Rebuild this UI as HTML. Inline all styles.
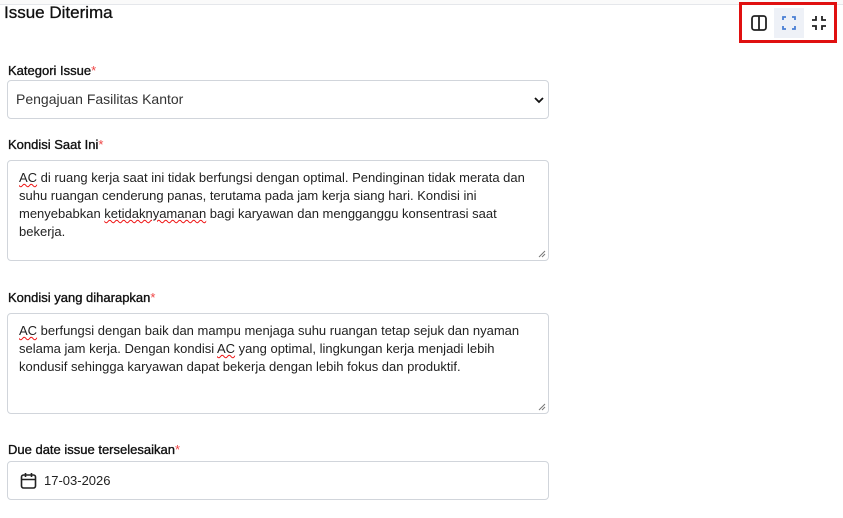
<!DOCTYPE html>
<html><head><style>
body{margin:0;width:843px;height:518px;background:#fff;font-family:"Liberation Sans",sans-serif;color:#1f2937;position:relative;overflow:hidden}
.topline{position:absolute;left:0;right:0;top:0;height:4px;border-bottom:1px solid #e5e7eb;background:#fafafa}
h1{position:absolute;left:4px;top:3px;margin:0;font-size:17px;font-weight:normal;color:#111;-webkit-text-stroke:0.3px #111}
.lbl{position:absolute;left:8px;font-size:13px;color:#111;-webkit-text-stroke:0.35px #111}
.lbl span{color:#ef4444;-webkit-text-stroke:0}
.box{position:absolute;left:7px;width:542px;border:1px solid #d1d5db;border-radius:4px;background:#fff;box-sizing:border-box}
.ta{font-size:13px;line-height:18px;color:#222;padding:8px 11px}
.u{text-decoration:underline wavy #e11;text-decoration-thickness:1px}
.tools{position:absolute;left:739px;top:2px;width:98px;height:41px;border:3px solid #e01010;box-sizing:border-box}
.btn{position:absolute;top:3px;width:30px;height:30px}
.grip{position:absolute;right:2px;bottom:2px}
</style></head><body>
<div class="topline"></div>
<h1>Issue Diterima</h1>
<div class="tools">
 <div class="btn" style="left:2px"><svg width="30" height="30"><rect x="8" y="8" width="14" height="14" rx="2.5" fill="none" stroke="#222" stroke-width="1.8"/><line x1="15" y1="8" x2="15" y2="22" stroke="#222" stroke-width="1.8"/></svg></div>
 <div class="btn" style="left:32px;background:#eef1f7"><svg width="30" height="30" fill="none" stroke="#4a7fd4" stroke-width="1.8"><path d="M9 12V9h3M18 9h3v3M21 18v3h-3M12 21H9v-3"/></svg></div>
 <div class="btn" style="left:62px"><svg width="30" height="30" fill="none" stroke="#222" stroke-width="1.8"><path d="M12 8v4H8M18 8v4h4M22 18h-4v4M8 18h4v4"/></svg></div>
</div>
<div class="lbl" style="top:63px">Kategori Issue<span>*</span></div>
<div class="box" style="top:80px;height:39px;font-size:14px;line-height:37px;padding-left:8px;color:#333">Pengajuan Fasilitas Kantor<svg style="position:absolute;right:4px;top:16px" width="10" height="7"><path d="M1 1l4 4 4-4" fill="none" stroke="#111" stroke-width="1.8"/></svg></div>
<div class="lbl" style="top:137px">Kondisi Saat Ini<span>*</span></div>
<div class="box ta" style="top:160px;height:101px"><span class="u">AC</span> di ruang kerja saat ini tidak berfungsi dengan optimal. Pendinginan tidak merata dan suhu ruangan cenderung panas, terutama pada jam kerja siang hari. Kondisi ini menyebabkan <span class="u">ketidaknyamanan</span> bagi karyawan dan mengganggu konsentrasi saat bekerja.<svg class="grip" width="8" height="8" stroke="#777"><path d="M1 7L7 1M4 7L7 4"/></svg></div>
<div class="lbl" style="top:290px">Kondisi yang diharapkan<span>*</span></div>
<div class="box ta" style="top:313px;height:101px"><span class="u">AC</span> berfungsi dengan baik dan mampu menjaga suhu ruangan tetap sejuk dan nyaman selama jam kerja. Dengan kondisi <span class="u">AC</span> yang optimal, lingkungan kerja menjadi lebih kondusif sehingga karyawan dapat bekerja dengan lebih fokus dan produktif.<svg class="grip" width="8" height="8" stroke="#777"><path d="M1 7L7 1M4 7L7 4"/></svg></div>
<div class="lbl" style="top:442px">Due date issue terselesaikan<span>*</span></div>
<div class="box" style="top:461px;height:39px;font-size:13px;line-height:37px;padding-left:36px;color:#222"><svg style="position:absolute;left:12px;top:10px" width="17" height="17" fill="none" stroke="#222" stroke-width="1.6"><rect x="1.5" y="3" width="14" height="13" rx="2"/><path d="M1.5 7.5h14M5.5 1v4M11.5 1v4"/></svg>17-03-2026</div>
</body></html>
